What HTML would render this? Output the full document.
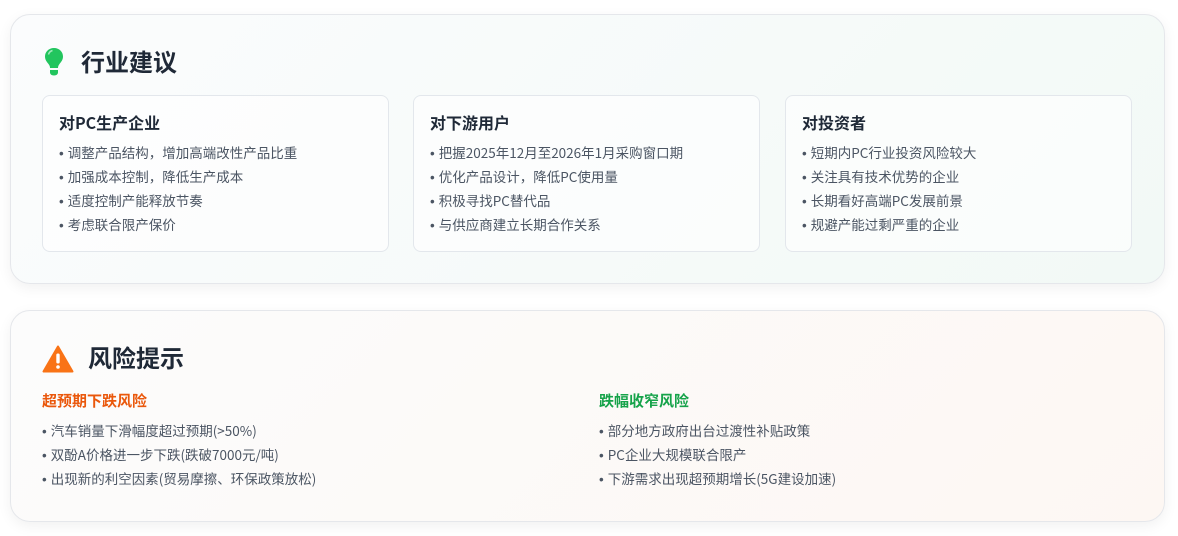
<!DOCTYPE html>
<html><head><meta charset="utf-8"><style>
*{margin:0;padding:0;box-sizing:border-box}
body{width:1178px;height:536px;background:#fff;font-family:"Noto Sans CJK SC","Liberation Sans",sans-serif;position:relative;overflow:hidden}
.card{position:absolute;left:10px;width:1155px;border:1px solid #e5e7eb;border-radius:20px;box-shadow:0 4px 14px rgba(0,0,0,0.06)}
.c1{top:14px;height:270px;background:linear-gradient(135deg,#fbfcfd,#f2f9f6)}
.c2{top:310px;height:212px;background:linear-gradient(135deg,#fcfcfc,#fdf7f3)}
.h{position:absolute;font-size:24px;font-weight:bold;color:#1f2937;line-height:30px}
.sub{position:absolute;top:80px;width:347px;height:157px;border:1px solid #e3e7ec;border-radius:8px;background:rgba(255,255,255,0.6);padding:15px 0 0 16px}
.sub h3{font-size:16px;font-weight:bold;color:#1f2937;line-height:22px;margin-bottom:7px}
ul{list-style:none}
li{font-size:13.5px;color:#4b5563;line-height:24px;height:24px;white-space:nowrap}
li:before{content:"•";font-family:"Liberation Sans",sans-serif;line-height:10px;margin-right:4px;color:#4b5563}
.col{position:absolute;top:78px}
.col h3{font-size:15px;font-weight:bold;line-height:24px;margin-bottom:5px}
</style></head><body>
<div class="card c1">
 <svg style="position:absolute;left:32px;top:32px" width="22" height="30" viewBox="0 0 22 30"><path d="M11 1C5.5 1 2 5 2 9.5c0 3.5 2 5.5 3.5 7.5 1 1.3 1.5 2.5 1.5 4h8c0-1.5.5-2.7 1.5-4C18 15 20 13 20 9.5 20 5 16.5 1 11 1z" fill="#22c55e"/><path d="M5.5 7.5C6 5.5 7.5 4 9.5 3.5" stroke="#fff" stroke-width="1.5" fill="none" opacity=".6"/><path d="M7 23h8v2.5c0 1.5-1.5 3-4 3s-4-1.5-4-3z" fill="#22c55e"/></svg>
 <div class="h" style="left:70px;top:31px">行业建议</div>
 <div class="sub" style="left:31px"><h3>对PC生产企业</h3><ul><li>调整产品结构，增加高端改性产品比重</li><li>加强成本控制，降低生产成本</li><li>适度控制产能释放节奏</li><li>考虑联合限产保价</li></ul></div>
 <div class="sub" style="left:402px"><h3>对下游用户</h3><ul><li>把握2025年12月至2026年1月采购窗口期</li><li>优化产品设计，降低PC使用量</li><li>积极寻找PC替代品</li><li>与供应商建立长期合作关系</li></ul></div>
 <div class="sub" style="left:774px"><h3>对投资者</h3><ul><li>短期内PC行业投资风险较大</li><li>关注具有技术优势的企业</li><li>长期看好高端PC发展前景</li><li>规避产能过剩严重的企业</li></ul></div>
</div>
<div class="card c2">
 <svg style="position:absolute;left:31px;top:34px" width="32" height="28" viewBox="0 0 32 28"><path d="M16 1.5L1.5 26.5h29z" fill="#f97316" stroke="#f97316" stroke-width="2" stroke-linejoin="round"/><rect x="14.3" y="8.5" width="3.4" height="10" rx="1.5" fill="#fff"/><circle cx="16" cy="22" r="1.8" fill="#fff"/></svg>
 <div class="h" style="left:77px;top:31px">风险提示</div>
 <div class="col" style="left:31px"><h3 style="color:#ea580c">超预期下跌风险</h3><ul><li>汽车销量下滑幅度超过预期(&gt;50%)</li><li>双酚A价格进一步下跌(跌破7000元/吨)</li><li>出现新的利空因素(贸易摩擦、环保政策放松)</li></ul></div>
 <div class="col" style="left:588px"><h3 style="color:#16a34a">跌幅收窄风险</h3><ul><li>部分地方政府出台过渡性补贴政策</li><li>PC企业大规模联合限产</li><li>下游需求出现超预期增长(5G建设加速)</li></ul></div>
</div>
</body></html>
